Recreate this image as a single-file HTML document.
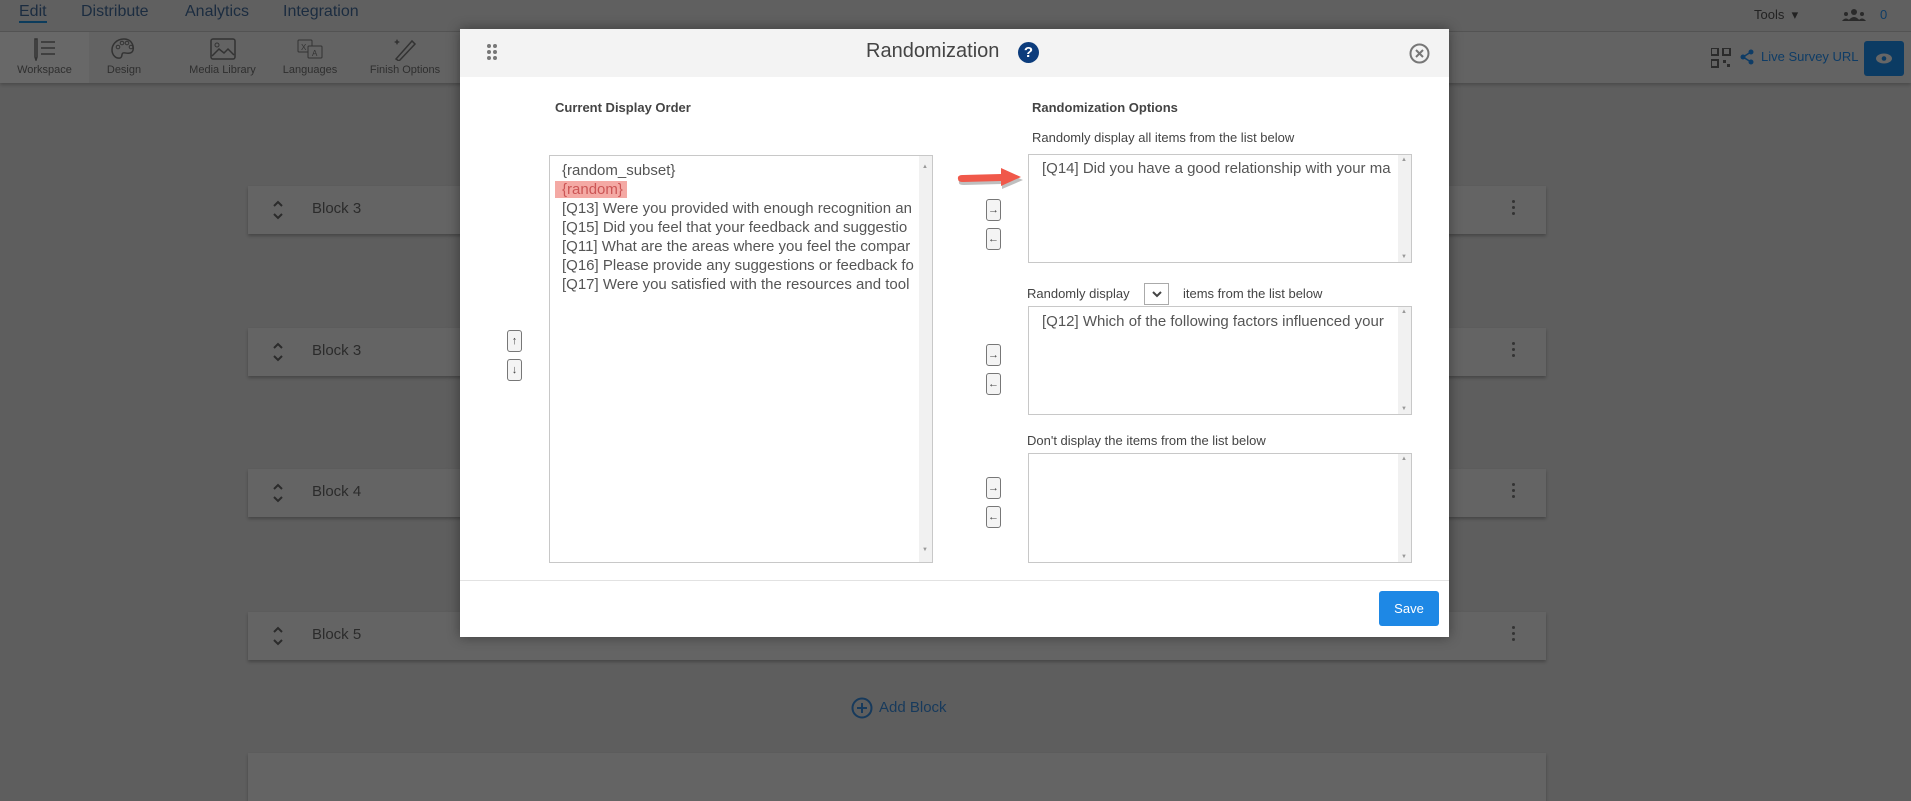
<!DOCTYPE html>
<html><head><style>
*{box-sizing:border-box;margin:0;padding:0}
body{width:1911px;height:769px;overflow:hidden;background:#5e5e5e;font-family:"Liberation Sans",sans-serif;position:relative;color:#333}
.abs{position:absolute}
.nav{left:0;top:0;width:1911px;height:32px;background:#606060;border-bottom:1px solid #545454}
.nav span{position:absolute;top:3px;font-size:16px;color:#1b2c40}
.tb{left:0;top:32px;width:1911px;height:51px;background:#636363;box-shadow:0 2px 3px rgba(0,0,0,.2)}
.tool{position:absolute;top:0;height:51px;text-align:center;font-size:11px;color:#2f2f2f}
.tool svg{display:block;margin:5px auto 3px}
.card{position:absolute;left:248px;width:1298px;height:48px;background:#646464;box-shadow:0 2px 3px rgba(0,0,0,.25)}
.card .t{position:absolute;left:64px;top:14px;font-size:15px;color:#2b2b2b}
.card svg.ch{position:absolute;left:24px;top:14px}
.card .dots{position:absolute;right:30px;top:14px;width:4px}
.card .dots i{display:block;width:3px;height:3px;background:#333;border-radius:50%;margin-bottom:3px}
.modal{left:460px;top:29px;width:989px;height:608px;background:#fff;box-shadow:0 0 12px rgba(0,0,0,.4)}
.hdr{left:0;top:0;width:989px;height:48px;background:#f3f3f3}
.lbl{font-size:13px;color:#444}
.box{position:absolute;background:#fff;border:1px solid #c8c8c8;font-size:15px;color:#555;overflow:hidden;white-space:nowrap}
.box .sb{position:absolute;right:0;top:0;bottom:0;width:13px;background:#f1f1f1}
.box .sb:before{content:"▲";position:absolute;top:2px;left:3px;font-size:6px;color:#999}
.box .sb:after{content:"▼";position:absolute;bottom:2px;left:3px;font-size:6px;color:#999}
.btn{position:absolute;width:15px;height:22px;border:1px solid #777;border-radius:3px;background:#f4f4f4;font-size:11px;text-align:center;line-height:20px;color:#444}
</style></head><body>
<div class="abs nav">
<span style="left:19px;border-bottom:2px solid #0c3c5c">Edit</span>
<span style="left:81px">Distribute</span>
<span style="left:185px">Analytics</span>
<span style="left:283px">Integration</span>
<span style="left:1754px;font-size:13px;top:7px;color:#222">Tools &nbsp;▾</span>
<svg class="abs" style="left:1842px;top:8px" width="24" height="14"><circle cx="12" cy="4" r="3" fill="#2a2a2a"/><path d="M6 13 Q12 5 18 13Z" fill="#2a2a2a"/><circle cx="4" cy="6" r="2" fill="#2a2a2a"/><circle cx="20" cy="6" r="2" fill="#2a2a2a"/><path d="M0 13 Q4 8 8 13Z M16 13 Q20 8 24 13Z" fill="#2a2a2a"/></svg>
<span style="left:1880px;font-size:13px;top:7px;color:#0f3d66">0</span>
</div>
<div class="abs tb">
<div class="tool" style="left:0;width:89px;background:#686868"><svg width="28" height="24"><path d="M4 2v18l1 3 1-3V2z" fill="none" stroke="#333" stroke-width="1.5"/><path d="M10 5h14M10 11h14M10 17h14" stroke="#333" stroke-width="1.5"/></svg>Workspace</div>
<div class="tool" style="left:89px;width:70px"><svg width="28" height="24"><path d="M14 2C6 2 2 8 2 13c0 5 4 9 8 8 3-1 1-4 3-5 2-1 6 2 9-1 3-3 1-13-8-13z" fill="none" stroke="#333" stroke-width="1.5"/><circle cx="8" cy="10" r="1.8" fill="none" stroke="#333"/><circle cx="12" cy="6" r="1.8" fill="none" stroke="#333"/><circle cx="17" cy="6" r="1.8" fill="none" stroke="#333"/><circle cx="21" cy="10" r="1.8" fill="none" stroke="#333"/></svg>Design</div>
<div class="tool" style="left:175px;width:95px"><svg width="28" height="24"><rect x="2" y="2" width="24" height="20" rx="2" fill="none" stroke="#333" stroke-width="1.5"/><circle cx="8" cy="8" r="2" fill="none" stroke="#333"/><path d="M3 19l7-7 5 4 4-4 6 6" fill="none" stroke="#333" stroke-width="1.5"/></svg>Media Library</div>
<div class="tool" style="left:275px;width:70px"><svg width="28" height="24"><rect x="2" y="3" width="14" height="12" rx="1" fill="none" stroke="#333"/><rect x="12" y="9" width="14" height="12" rx="1" fill="#636363" stroke="#333"/><text x="5" y="13" font-size="8" fill="#333">X</text><text x="16" y="19" font-size="8" fill="#333">A</text></svg>Languages</div>
<div class="tool" style="left:360px;width:90px"><svg width="28" height="24"><path d="M5 22L21 4l3 3L8 24z" fill="none" stroke="#333" stroke-width="1.5"/><path d="M5 4l1-2 1 2 2 1-2 1-1 2-1-2-2-1z" fill="#333"/></svg>Finish Options</div>
<svg class="abs" style="left:1711px;top:16px" width="20" height="20"><rect x="0" y="0" width="7" height="7" fill="none" stroke="#2b2b2b" stroke-width="2"/><rect x="12" y="0" width="7" height="7" fill="none" stroke="#2b2b2b" stroke-width="2"/><rect x="0" y="12" width="7" height="7" fill="none" stroke="#2b2b2b" stroke-width="2"/><rect x="12" y="12" width="3" height="3" fill="#2b2b2b"/><rect x="16" y="16" width="3" height="3" fill="#2b2b2b"/></svg>
<svg class="abs" style="left:1740px;top:17px" width="14" height="16"><circle cx="11" cy="3" r="2.5" fill="#0e3c66"/><circle cx="3" cy="8" r="2.5" fill="#0e3c66"/><circle cx="11" cy="13" r="2.5" fill="#0e3c66"/><path d="M11 3L3 8l8 5" fill="none" stroke="#0e3c66" stroke-width="1.5"/></svg>
<div class="abs" style="left:1761px;top:17px;font-size:13px;color:#0e3c66">Live Survey URL</div>
<div class="abs" style="left:1864px;top:9px;width:40px;height:35px;background:#0b3b63;border-radius:3px"><svg style="position:absolute;left:12px;top:12px" width="16" height="11"><ellipse cx="8" cy="5.5" rx="8" ry="5" fill="#666"/><circle cx="8" cy="5.5" r="2.3" fill="#0b3b63"/></svg></div>
</div>
<div class="card" style="top:186px"><svg class="ch" width="12" height="20"><path d="M2 6l4-4 4 4M2 14l4 4 4-4" fill="none" stroke="#2b2b2b" stroke-width="2"/></svg><div class="t">Block 3</div><div class="dots"><i></i><i></i><i></i></div></div>
<div class="card" style="top:328px"><svg class="ch" width="12" height="20"><path d="M2 6l4-4 4 4M2 14l4 4 4-4" fill="none" stroke="#2b2b2b" stroke-width="2"/></svg><div class="t">Block 3</div><div class="dots"><i></i><i></i><i></i></div></div>
<div class="card" style="top:469px"><svg class="ch" width="12" height="20"><path d="M2 6l4-4 4 4M2 14l4 4 4-4" fill="none" stroke="#2b2b2b" stroke-width="2"/></svg><div class="t">Block 4</div><div class="dots"><i></i><i></i><i></i></div></div>
<div class="card" style="top:612px"><svg class="ch" width="12" height="20"><path d="M2 6l4-4 4 4M2 14l4 4 4-4" fill="none" stroke="#2b2b2b" stroke-width="2"/></svg><div class="t">Block 5</div><div class="dots"><i></i><i></i><i></i></div></div>
<svg class="abs" style="left:851px;top:697px" width="22" height="22"><circle cx="11" cy="11" r="9.5" fill="none" stroke="#173a5c" stroke-width="2"/><path d="M11 6v10M6 11h10" stroke="#173a5c" stroke-width="2"/></svg>
<div class="abs" style="left:879px;top:699px;font-size:15px;color:#173a5c">Add Block</div>
<div class="card" style="top:753px"></div>

<div class="abs modal">
<div class="abs hdr">
<svg class="abs" style="left:26px;top:14px" width="12" height="18"><g fill="#777"><circle cx="3" cy="3" r="2"/><circle cx="9" cy="3" r="2"/><circle cx="3" cy="9" r="2"/><circle cx="9" cy="9" r="2"/><circle cx="3" cy="15" r="2"/><circle cx="9" cy="15" r="2"/></g></svg>
<div class="abs" style="left:406px;top:11px;font-size:20px;color:#444">Randomization</div>
<div class="abs" style="left:558px;top:13px;width:21px;height:21px;border-radius:50%;background:#0c3c7c;color:#fff;font-weight:bold;font-size:15px;text-align:center;line-height:21px">?</div>
<svg class="abs" style="left:949px;top:14px" width="21" height="21"><circle cx="10.5" cy="10.5" r="9" fill="none" stroke="#777" stroke-width="2"/><path d="M7 7l7 7M14 7l-7 7" stroke="#777" stroke-width="2"/></svg>
</div>
<div class="abs" style="left:0;top:551px;width:989px;border-top:1px solid #e2e2e2"></div>
<div class="abs lbl" style="left:95px;top:71px;font-weight:bold">Current Display Order</div>
<div class="abs lbl" style="left:572px;top:71px;font-weight:bold">Randomization Options</div>
<div class="abs lbl" style="left:572px;top:101px">Randomly display all items from the list below</div>
<div class="abs lbl" style="left:567px;top:257px">Randomly display</div>
<div class="abs" style="left:684px;top:254px;width:25px;height:22px;border:1px solid #aaa"><svg style="position:absolute;left:7px;top:7px" width="10" height="7"><path d="M1 1l4 4 4-4" fill="none" stroke="#444" stroke-width="2"/></svg></div>
<div class="abs lbl" style="left:723px;top:257px">items from the list below</div>
<div class="abs lbl" style="left:567px;top:404px">Don't display the items from the list below</div>

<div class="box" style="left:89px;top:126px;width:384px;height:408px;padding:5px 12px;line-height:19px">
{random_subset}<br><span style="background:#f4a9a4;color:#c55;padding:0 4px 0 7px;margin-left:-7px">{random}</span><br>[Q13] Were you provided with enough recognition an<br>[Q15] Did you feel that your feedback and suggestio<br>[Q11] What are the areas where you feel the compar<br>[Q16] Please provide any suggestions or feedback fo<br>[Q17] Were you satisfied with the resources and tool<div class="sb"></div></div>

<div class="box" style="left:568px;top:125px;width:384px;height:109px;padding:5px 13px"><span>[Q14] Did you have a good relationship with your ma</span><div class="sb"></div></div>
<div class="box" style="left:568px;top:277px;width:384px;height:109px;padding:6px 13px"><span>[Q12] Which of the following factors influenced your</span><div class="sb"></div></div>
<div class="box" style="left:568px;top:424px;width:384px;height:110px"><div class="sb"></div></div>

<div class="btn" style="left:47px;top:301px">↑</div>
<div class="btn" style="left:47px;top:330px">↓</div>
<div class="btn" style="left:526px;top:170px">→</div>
<div class="btn" style="left:526px;top:199px">←</div>
<div class="btn" style="left:526px;top:315px">→</div>
<div class="btn" style="left:526px;top:344px">←</div>
<div class="btn" style="left:526px;top:448px">→</div>
<div class="btn" style="left:526px;top:477px">←</div>

<svg class="abs" style="left:495px;top:138px" width="72" height="24"><path d="M3 14 Q2 9 8 9 L46 8 L46 2 L67 11 L46 20 L46 15 L8 16 Q3 16 3 14Z" fill="#000" opacity=".25" transform="translate(1,2)"/><path d="M3 12 Q2 8 8 8 L46 7 L46 1 L66 10 L46 19 L46 14 L8 15 Q3 15 3 12Z" fill="#f0584a"/></svg>

<div class="abs" style="left:919px;top:562px;width:60px;height:35px;background:#1e88e5;border-radius:3px;color:#fff;font-size:13px;text-align:center;line-height:35px">Save</div>
</div>
</body></html>
